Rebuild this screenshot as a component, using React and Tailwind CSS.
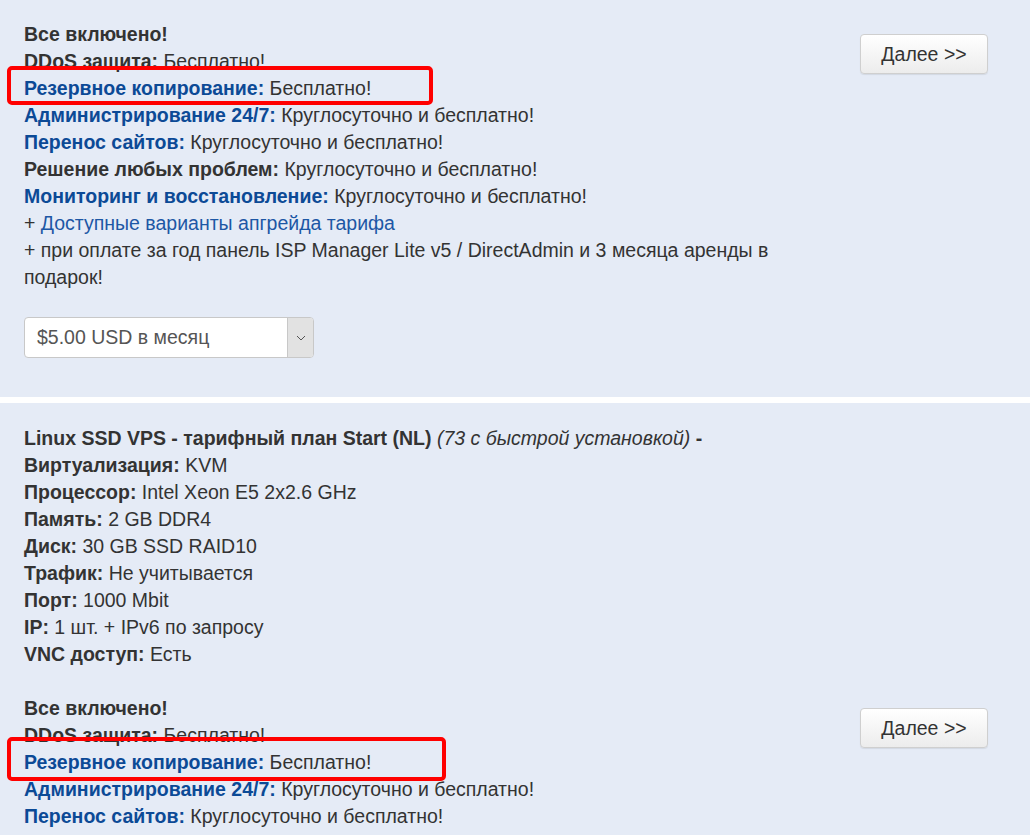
import React from 'react';

const font = { fontFamily: '"Liberation Sans", Arial, sans-serif' };

function Feature({ label, value, blue = true }) {
  return (
    <div>
      <b className={blue ? 'text-[#0c4a96]' : 'text-[#333]'}>{label}</b> {value}
    </div>
  );
}

function NextButton() {
  return (
    <button
      type="button"
      className="h-[40px] w-[128px] shrink-0 rounded-[4px] border border-[#cfcfcf] bg-gradient-to-b from-white to-[#ececec] text-[19.5px] text-[#333] shadow-[0_1px_1px_rgba(0,0,0,0.08)]"
    >
      Далее &gt;&gt;
    </button>
  );
}

function Included({ boxClass }) {
  return (
    <div className="relative flex justify-between">
      <div>
        <div className="font-bold">Все включено!</div>
        <Feature label="DDoS защита:" value="Бесплатно!" blue={false} />
        <Feature label="Резервное копирование:" value="Бесплатно!" />
        <Feature label="Администрирование 24/7:" value="Круглосуточно и бесплатно!" />
        <Feature label="Перенос сайтов:" value="Круглосуточно и бесплатно!" />
        <Feature label="Решение любых проблем:" value="Круглосуточно и бесплатно!" blue={false} />
        <Feature label="Мониторинг и восстановление:" value="Круглосуточно и бесплатно!" />
        <div>
          + <span className="text-[#1d57a5]">Доступные варианты апгрейда тарифа</span>
        </div>
        <div className="w-[770px]">
          + при оплате за год панель ISP Manager Lite v5 / DirectAdmin и 3 месяца аренды в подарок!
        </div>
      </div>
      <div className="mt-[13px] mr-[18px]">
        <NextButton />
      </div>
      {/* highlight */}
      <div className={`pointer-events-none absolute left-[-17px] top-[45px] h-[39px] rounded-[5px] border-[4px] border-[#ff0000] ${boxClass}`} />
    </div>
  );
}

function PriceSelect() {
  return (
    <div className="flex h-[41px] w-[290px] overflow-hidden rounded-[4px] border border-[#c8c8c8] bg-white">
      <div className="flex flex-1 items-center pl-[12px] text-[19.5px] text-[#555]">$5.00 USD в месяц</div>
      <div className="flex w-[26px] items-center justify-center border-l border-[#c8c8c8] bg-[#e2e2e2]">
        <svg width="10" height="6" viewBox="0 0 10 6" fill="none">
          <path d="M1 1l4 4 4-4" stroke="#555" strokeWidth="1" />
        </svg>
      </div>
    </div>
  );
}

export default function App() {
  return (
    <div className="h-[835px] overflow-hidden bg-white text-[19.5px] leading-[27px] text-[#333]" style={font}>
      <div className="bg-[#e5ebf6] pl-[24px] pr-[24px] pt-[21px] pb-[39px]">
        <Included boxClass="w-[426px]" />
        <div className="mt-[26px]">
          <PriceSelect />
        </div>
      </div>
      <div className="h-[6px]" />
      <div className="bg-[#e5ebf6] pl-[24px] pr-[24px] pt-[22px] pb-[40px]">
        <div>
          <b>Linux SSD VPS - тарифный план Start (NL)</b> <i>(73 с быстрой установкой)</i> <b>-</b>
        </div>
        <Feature label="Виртуализация:" value="KVM" blue={false} />
        <Feature label="Процессор:" value="Intel Xeon E5 2x2.6 GHz" blue={false} />
        <Feature label="Память:" value="2 GB DDR4" blue={false} />
        <Feature label="Диск:" value="30 GB SSD RAID10" blue={false} />
        <Feature label="Трафик:" value="Не учитывается" blue={false} />
        <Feature label="Порт:" value="1000 Mbit" blue={false} />
        <Feature label="IP:" value="1 шт. + IPv6 по запросу" blue={false} />
        <Feature label="VNC доступ:" value="Есть" blue={false} />
        <div className="h-[27px]" />
        <Included boxClass="w-[439px] !top-[42px] !h-[44px]" />
      </div>
    </div>
  );
}
